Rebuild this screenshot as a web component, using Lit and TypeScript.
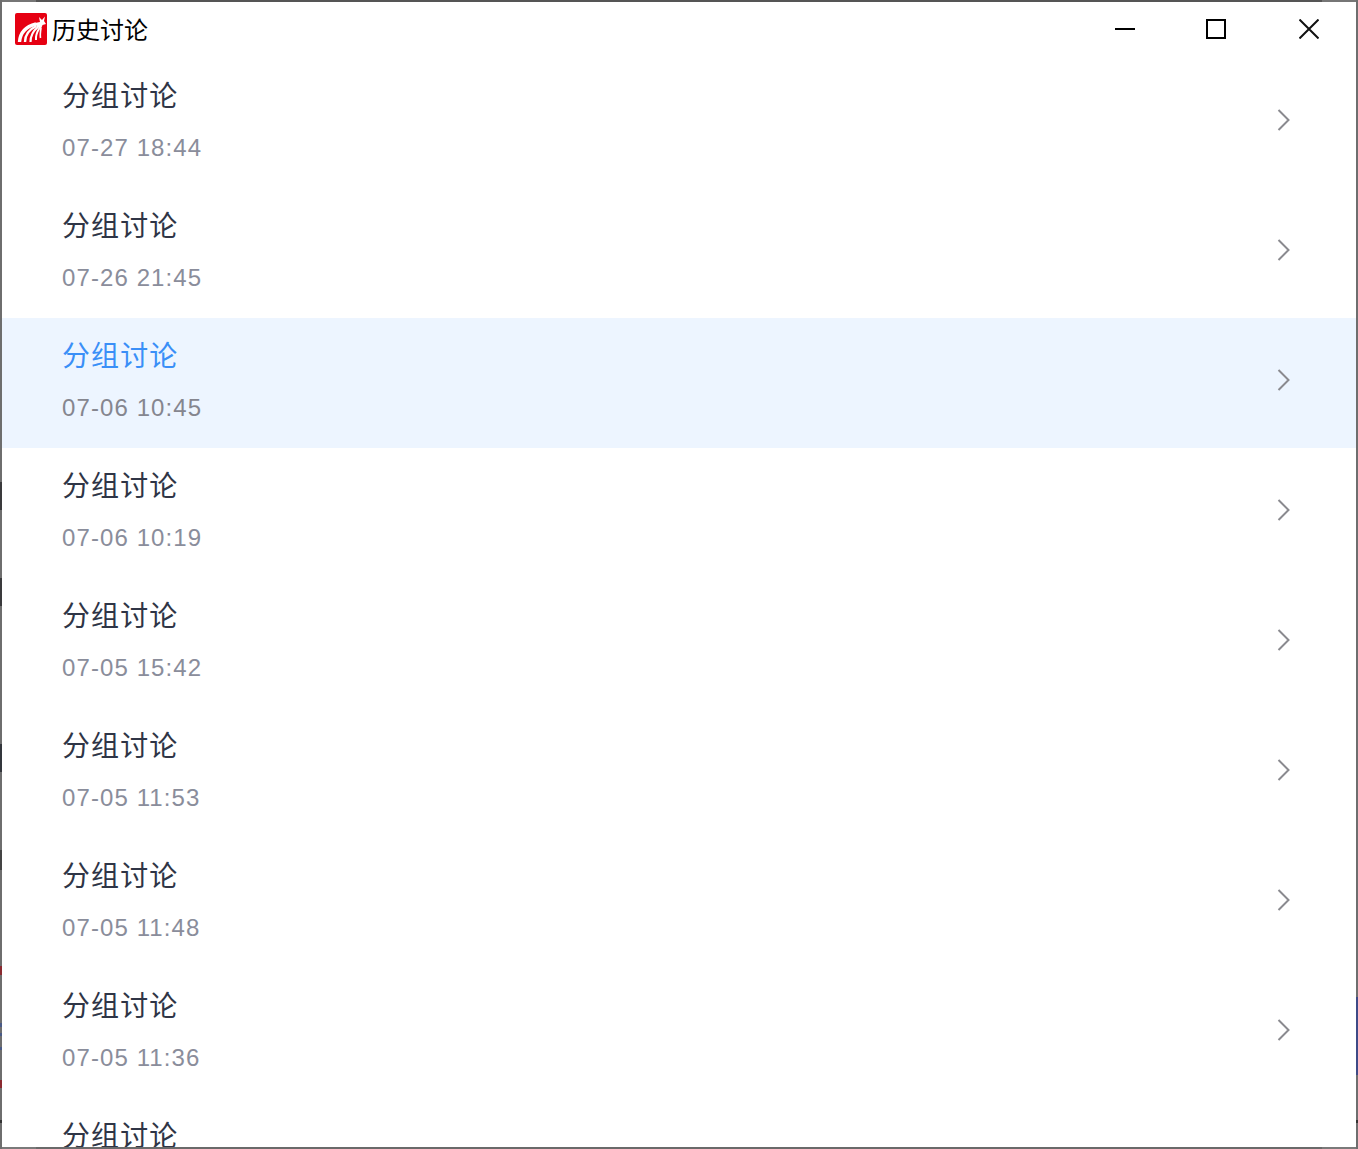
import { LitElement, html, css, svg } from "lit";
import { customElement } from "lit/decorators.js";

const ITEMS = [
  "07-27 18:44",
  "07-26 21:45",
  "07-06 10:45",
  "07-06 10:19",
  "07-05 15:42",
  "07-05 11:53",
  "07-05 11:48",
  "07-05 11:36",
  "",
];
const ACTIVE = 2;

const logo = svg`<svg class="logo" width="32" height="32" viewBox="0 0 32 32">
  <rect width="32" height="32" rx="2" fill="#e60012"/>
  <g fill="none" stroke="#fff">
    <path d="M4.500 29C5 22 9 14 21 11" stroke-width="3.400"/>
    <path d="M10 29C10 23 13 17 21.500 13" stroke-width="2.400"/>
    <path d="M15.500 29C15.500 24 18 18 23 14" stroke-width="2.200"/>
    <path d="M21 27C20.500 23 22 19 24.500 15" stroke-width="2"/>
    <path d="M25.500 25C25 22 25.500 18 26 15" stroke-width="1.600"/>
  </g>
  <path d="M20 10L25 9L24 4L27 7L30 3.500L29 8L31 11L27.500 12L26 16L22 14Z" fill="#fff"/>
</svg>`;

const chevron = svg`<svg class="chev" width="14" height="24" viewBox="0 0 14 24">
  <path d="M1.500 2L11.500 12L1.500 22" fill="none" stroke="#8a8a8f" stroke-width="2"/>
</svg>`;

@customElement("app-root")
export class AppRoot extends LitElement {
  static styles = css`
    :host {
      display: block;
      width: 1358px;
      height: 1149px;
      box-sizing: border-box;
      padding: 2px;
      overflow: hidden;
      background:
        linear-gradient(to bottom,
          #6e6e6e 482px, #3a3a3c 482px, #3a3a3c 510px, #6e6e6e 510px,
          #6e6e6e 578px, #3a3a3c 578px, #3a3a3c 606px, #6e6e6e 606px,
          #6e6e6e 744px, #33363c 744px, #33363c 772px, #6e6e6e 772px,
          #6e6e6e 850px, #444 850px, #444 870px, #6e6e6e 870px,
          #6e6e6e 966px, #8a2a30 966px, #8a2a30 975px, #6e6e6e 975px,
          #6e6e6e 1023px, #4a5a86 1023px, #4a5a86 1027px, #6e6e6e 1027px,
          #6e6e6e 1033px, #4a5a86 1033px, #4a5a86 1036px, #6e6e6e 1036px,
          #6e6e6e 1047px, #4a5a86 1047px, #4a5a86 1050px, #6e6e6e 1050px,
          #6e6e6e 1080px, #8a2a30 1080px, #8a2a30 1088px, #6e6e6e 1088px,
          #6e6e6e 1120px, #333 1120px, #333 1123px, #6e6e6e 1123px
        ) left top / 2px 100% no-repeat,
        linear-gradient(to bottom,
          #6e6e6e 997px, #3e4a86 997px, #3e4a86 1075px, #6e6e6e 1075px,
          #6e6e6e 1120px, #333 1120px, #333 1123px, #6e6e6e 1123px
        ) right top / 2px 100% no-repeat,
        linear-gradient(to right,
          #767676 36px, #555 36px, #555 1322px, #767676 1322px
        ) left top / 100% 2px no-repeat,
        linear-gradient(to right,
          #7a7a7a 36px, #6a6a6a 36px, #6a6a6a 1322px, #7a7a7a 1322px
        ) left bottom / 100% 2px no-repeat,
        #6e6e6e;
    }
    .win {
      height: 100%;
      background: #fff;
      overflow: hidden;
      display: flex;
      flex-direction: column;
    }
    .bar {
      flex: none;
      height: 56px;
      box-sizing: border-box;
      display: flex;
      align-items: center;
      padding: 0 0 2px 13px;
    }
    .logo {
      flex: none;
    }
    .caption {
      margin-left: 5px;
      font: 24px/32px "Noto Sans CJK SC", "Liberation Sans", sans-serif;
      color: #000;
    }
    .controls {
      margin-left: auto;
      display: flex;
      align-items: center;
      margin-right: 37px;
    }
    .controls svg {
      display: block;
    }
    .controls .max {
      margin-left: 71px;
    }
    .controls .close {
      margin-left: 73px;
    }
    .list {
      flex: 1;
      min-height: 0;
      overflow: hidden;
    }
    .row {
      height: 130px;
      box-sizing: border-box;
      padding: 0 65px 6px 60px;
      display: flex;
      align-items: center;
      justify-content: space-between;
    }
    .row.active {
      background: #edf5ff;
    }
    .text {
      align-self: flex-start;
      padding-top: 16px;
    }
    .title {
      font: 28px/40px "Noto Sans CJK SC", "Liberation Sans", sans-serif;
      letter-spacing: 1.100px;
      color: #2f3546;
    }
    .active .title {
      color: #3a8ff7;
    }
    .date {
      margin-top: 18px;
      font: 24px/32px "Liberation Sans", Arial, sans-serif;
      letter-spacing: 1.100px;
      color: #8a8d9b;
    }
    .active .date {
      color: #85868f;
    }
  `;

  render() {
    return html`<div class="win">
      <div class="bar">
        ${logo}
        <span class="caption">历史讨论</span>
        <div class="controls">
          <svg width="20" height="20" viewBox="0 0 20 20"><path d="M0 10H20" stroke="#000" stroke-width="2"/></svg>
          <svg class="max" width="20" height="20" viewBox="0 0 20 20"><rect x="1" y="1" width="18" height="18" fill="none" stroke="#000" stroke-width="2"/></svg>
          <svg class="close" width="20" height="20" viewBox="0 0 20 20"><path d="M0.500 0.500L19.500 19.500M19.500 0.500L0.500 19.500" fill="none" stroke="#111" stroke-width="2"/></svg>
        </div>
      </div>
      <div class="list">
        ${ITEMS.map(
          (d, i) => html`<div class="row ${i === ACTIVE ? "active" : ""}">
            <div class="text">
              <div class="title">分组讨论</div>
              ${d ? html`<div class="date">${d}</div>` : null}
            </div>
            ${d ? chevron : null}
          </div>`
        )}
      </div>
    </div>`;
  }
}
